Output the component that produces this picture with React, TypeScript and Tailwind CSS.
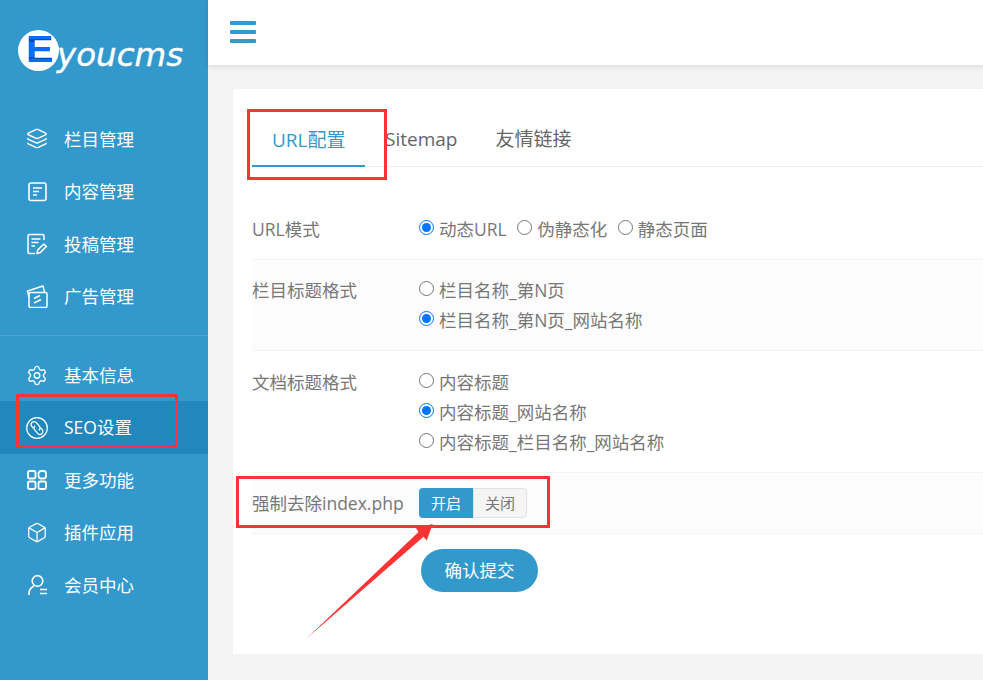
import React from 'react';
import { Layers, Settings, Box } from 'lucide-react';

const font = { fontFamily: '"Open Sans", "Noto Sans CJK SC", sans-serif' };

const DocIcon = () => (
  <svg width="21" height="21" viewBox="0 0 21 21" fill="none" stroke="white" strokeWidth="1.6">
    <rect x="2" y="2" width="17" height="17.500" rx="2" />
    <path d="M6 7h9M6 10.500h6M6 14h4" />
  </svg>
);

const EditIcon = () => (
  <svg width="22" height="22" viewBox="0 0 22 22" fill="none" stroke="white" strokeWidth="1.500">
    <path d="M18 7V3a1.500 1.500 0 0 0-1.500-1.500H3.500A1.500 1.500 0 0 0 2 3v16a1.500 1.500 0 0 0 1.500 1.500H9" />
    <path d="M5.500 6h9M5.500 9.500h7M5.500 13h3.500" />
    <path d="M11 20.500l.8-3.500 6-6 2.500 2.500-6 6z" />
  </svg>
);

const AdIcon = () => (
  <svg width="22" height="23" viewBox="0 0 22 23" fill="none" stroke="white" strokeWidth="1.500">
    <path d="M3 12L1.500 6 17 1l1.500 6" />
    <rect x="3" y="7.500" width="18" height="15" rx="1.500" />
    <path d="M8 13.500l6-3M8 18l7-3.500" />
  </svg>
);

const LinkIcon = () => (
  <svg width="22" height="22" viewBox="0 0 22 22" fill="none" stroke="white" strokeWidth="1.200">
    <circle cx="11" cy="11" r="10.300" />
    <g transform="rotate(-40 11 11)">
      <path d="M8 9V6.500a3 3 0 0 1 6 0V11a3 3 0 0 1-3 3" />
      <path d="M14 13v2.500a3 3 0 0 1-6 0V11a3 3 0 0 1 3-3" />
    </g>
  </svg>
);

const GridIcon = () => (
  <svg width="20" height="20" viewBox="0 0 20 20" fill="none" stroke="white" strokeWidth="1.800">
    <rect x="1" y="1" width="7.500" height="7.500" rx="1.500" />
    <rect x="11.500" y="1" width="7.500" height="7.500" rx="2.500" />
    <rect x="1" y="11.500" width="7.500" height="7.500" rx="1.500" />
    <rect x="11.500" y="11.500" width="7.500" height="7.500" rx="1.500" />
  </svg>
);

const MemberIcon = () => (
  <svg width="21" height="21" viewBox="0 0 21 21" fill="none" stroke="white" strokeWidth="1.600">
    <circle cx="10.500" cy="6" r="5.300" />
    <path d="M2 20v-1.500a8.500 8.500 0 0 1 5-7.500M13 14.500h7M13 18.500h7" />
  </svg>
);

const topMenu = [
  { label: '栏目管理', icon: <Layers size={25} strokeWidth={1.500} color="white" /> },
  { label: '内容管理', icon: <DocIcon /> },
  { label: '投稿管理', icon: <EditIcon /> },
  { label: '广告管理', icon: <AdIcon /> },
];

const bottomMenu = [
  { label: '基本信息', icon: <Settings size={25} strokeWidth={1.500} color="white" /> },
  { label: 'SEO设置', icon: <LinkIcon />, active: true },
  { label: '更多功能', icon: <GridIcon /> },
  { label: '插件应用', icon: <Box size={25} strokeWidth={1.400} color="white" /> },
  { label: '会员中心', icon: <MemberIcon /> },
];

function MenuItem({ label, icon, active }: { label: string; icon: React.ReactNode; active?: boolean }) {
  return (
    <div className={`h-[52.500px] flex items-center pl-[26px] ${active ? 'bg-[#2287bd]' : ''}`}>
      <span className="w-[22px] flex items-center justify-center">{icon}</span>
      <span className="ml-[16px] text-[17.500px] text-white">{label}</span>
    </div>
  );
}

function Radio({ label, checked }: { label: string; checked?: boolean }) {
  return (
    <label className="flex items-center h-[30px] text-[17.500px] text-[#777]">
      <input type="radio" readOnly checked={!!checked} className="w-[15px] h-[15px] m-0 mb-[4px]" />
      <span className="ml-[5px]">{label}</span>
    </label>
  );
}

function Row({ label, children, shaded, className }: { label: string; children: React.ReactNode; shaded?: boolean; className?: string }) {
  return (
    <div className={`flex border-b border-[#f3f3f3] ${shaded ? 'bg-[#fcfcfc]' : ''} ${className}`}>
      <div className="w-[167px] shrink-0 text-[17.500px] text-[#777] leading-[30px]">{label}</div>
      <div>{children}</div>
    </div>
  );
}

export default function App() {
  return (
    <div className="relative flex w-[983px] h-[680px] overflow-hidden bg-[#f3f3f3]" style={font}>
      <aside className="w-[208px] shrink-0 bg-[#3398cc] flex flex-col">
        <div className="h-[112.500px] relative">
          <div className="absolute left-[18px] top-[30px] w-[41px] h-[41px] rounded-full bg-white" />
          <span
            className="absolute left-[26px] top-[28px] h-[44px] text-[37px] leading-[44px] font-bold text-transparent bg-clip-text bg-[linear-gradient(#0a6cff_25%,#0a4ab8_25%,#0a4ab8_32%,#0a6cff_32%,#0a6cff_66%,#0a4ab8_66%,#0a4ab8_71%,#0a6cff_71%)] scale-x-[1.120] origin-left"
            style={{ fontFamily: '"Liberation Sans", sans-serif' }}
          >
            E
          </span>
          <span className="absolute left-[57px] top-[33px] text-[32.500px] leading-[44px] italic text-white" style={{ fontFamily: '"DejaVu Sans", sans-serif', WebkitTextStroke: '0.4px white' }}>youcms</span>
        </div>
        <nav>
          {topMenu.map((m) => (
            <MenuItem key={m.label} {...m} />
          ))}
        </nav>
        <div className="mt-[12.500px] border-t border-[#4ba5d3] h-[13.750px]" />
        <nav>
          {bottomMenu.map((m) => (
            <MenuItem key={m.label} {...m} />
          ))}
        </nav>
      </aside>

      <main className="flex-1 min-w-0 flex flex-col">
        <header className="h-[65px] bg-white shadow-[0_1px_5px_rgba(0,0,0,0.12)] flex items-center pl-[22px]">
          <div className="w-[26px] flex flex-col gap-[5px] mb-[2px]">
            <div className="h-[4px] bg-[#3398cc] rounded-[1px]" />
            <div className="h-[4px] bg-[#3398cc] rounded-[1px]" />
            <div className="h-[4px] bg-[#3398cc] rounded-[1px]" />
          </div>
        </header>

        <section className="mt-[24px] ml-[25px] h-[565px] bg-white pl-[19px]">
          <div className="h-[78px] flex items-end border-b border-[#eeeeee] text-[19px] text-[#666]">
            <div className="w-[113px] h-[78px] mb-[-1px] pt-[34px] pl-[20px] leading-[34px] text-[#3398cc] border-b-2 border-[#3398cc]">URL配置</div>
            <div className="h-[78px] pt-[34px] pl-[20px] leading-[34px]">Sitemap</div>
            <div className="h-[78px] pt-[34px] pl-[38px] leading-[34px]">友情链接</div>
          </div>

          <Row label="URL模式" className="h-[93px] pt-[47px]">
            <div className="flex gap-[10.500px]">
              <Radio label="动态URL" checked />
              <Radio label="伪静态化" />
              <Radio label="静态页面" />
            </div>
          </Row>
          <Row label="栏目标题格式" shaded className="h-[91px] pt-[15px]">
            <Radio label="栏目名称_第N页" />
            <Radio label="栏目名称_第N页_网站名称" checked />
          </Row>
          <Row label="文档标题格式" className="h-[122px] pt-[16px]">
            <Radio label="内容标题" />
            <Radio label="内容标题_网站名称" checked />
            <Radio label="内容标题_栏目名称_网站名称" />
          </Row>
          <Row label="强制去除index.php" shaded className="h-[61px] pt-[15px]">
            <div className="flex w-[108px] h-[30px] text-[15px] leading-[30px] text-center">
              <div className="w-[54px] bg-[#3398cc] text-white rounded-l-[4px]">开启</div>
              <div className="w-[54px] bg-[#f5f5f5] text-[#777] border border-[#e2e2e2] rounded-r-[4px] leading-[28px]">关闭</div>
            </div>
          </Row>

          <button className="mt-[15px] ml-[169px] w-[117px] h-[43px] rounded-full bg-[#3398cc] text-white text-[17.500px]">确认提交</button>
        </section>
      </main>

      {/* annotations drawn over the screenshot */}
      <div className="absolute left-[247px] top-[109px] w-[140px] h-[71px] border-[3px] border-[#fb3335]" />
      <div className="absolute left-[16px] top-[394px] w-[162px] h-[54px] border-[3px] border-[#fb3335]" />
      <div className="absolute left-[236px] top-[476px] w-[314px] h-[52px] border-[3px] border-[#fb3335]" />
      <svg className="absolute left-[300px] top-[518px]" width="140" height="126" viewBox="300 518 140 126">
        <polygon points="306,639 418.500,532 416,528.300 432.700,524 426.700,540.500 423.500,536.700" fill="#fb3335" />
      </svg>
    </div>
  );
}
